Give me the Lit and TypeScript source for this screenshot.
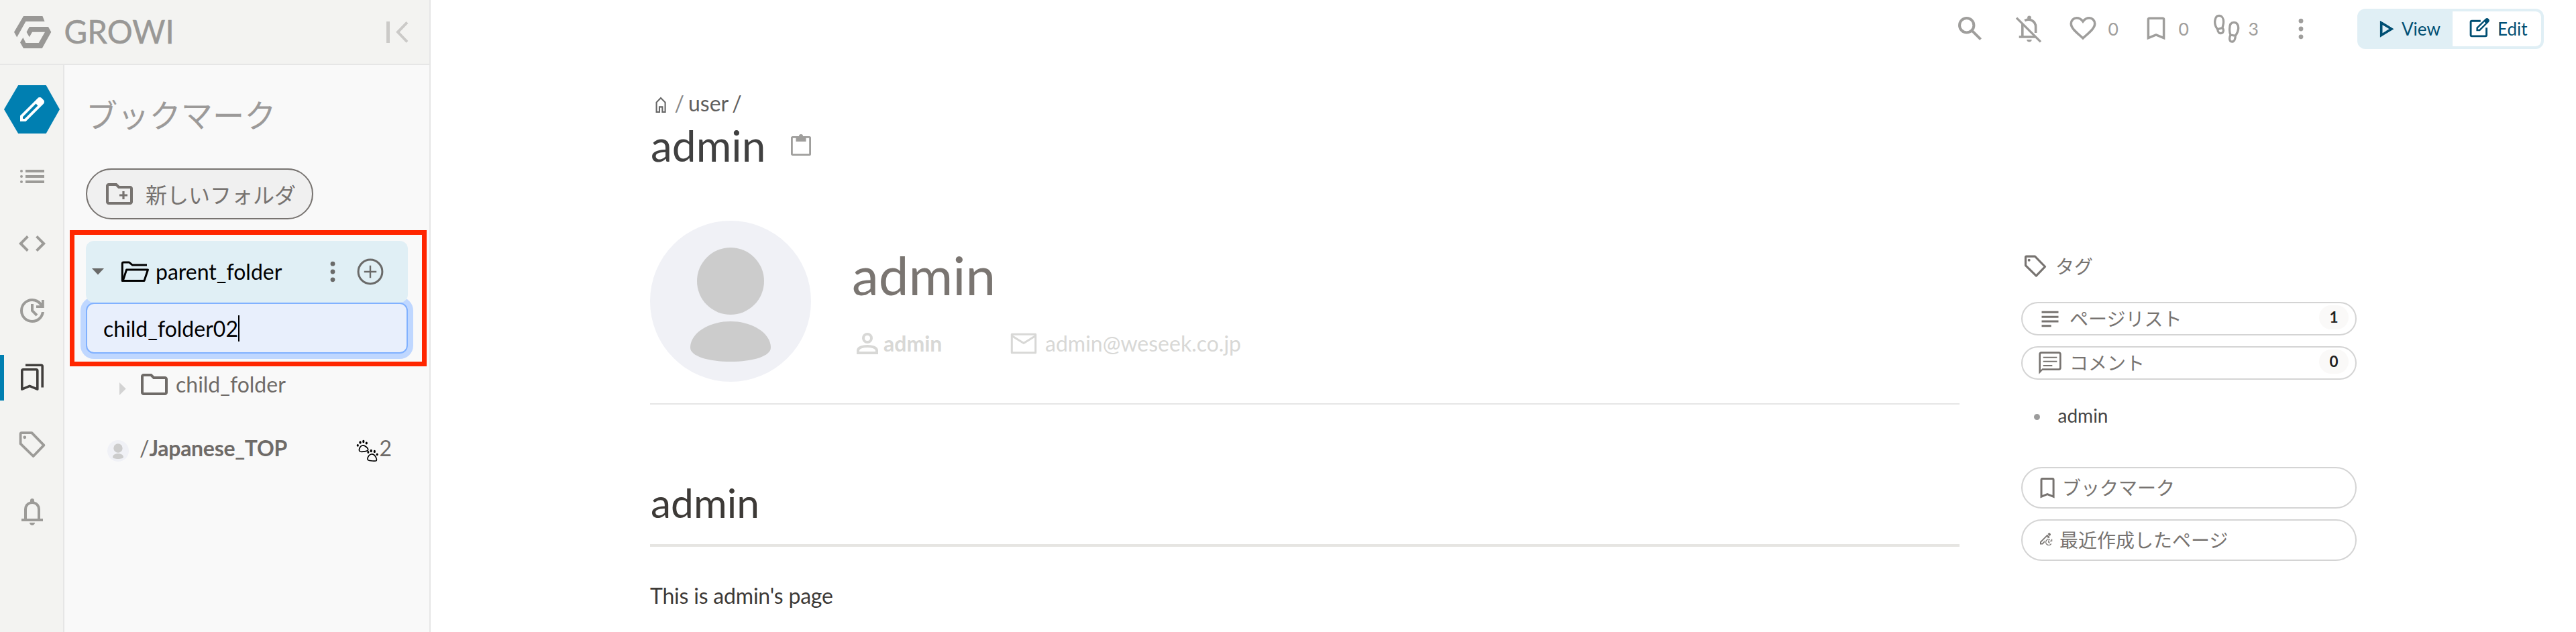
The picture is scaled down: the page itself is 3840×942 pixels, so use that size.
import { LitElement, html, svg, css } from "lit";
import { customElement, property } from "lit/decorators.js";
import { classMap } from "lit/directives/class-map.js";

const stroke = (d: string, w: number) =>
  svg`<path d=${d} fill="none" stroke="currentColor" stroke-width=${w} stroke-linejoin="round"/>`;
const miter = (d: string, w: number) =>
  svg`<path d=${d} fill="none" stroke="currentColor" stroke-width=${w}/>`;
const fill = (d: string) => svg`<path d=${d} fill="currentColor"/>`;

const FOLDER =
  "M4 20q-.825 0-1.412-.587Q2 18.825 2 18V6q0-.825.588-1.412Q3.175 4 4 4h6l2 2h8q.825 0 1.413.588Q22 7.175 22 8v10q0 .825-.587 1.413Q20.825 20 20 20Zm0-2h16V8h-8.825l-2-2H4Z";

/** Glyph table: [viewBox width, viewBox height, content]. */
const ICONS: Record<string, [number, number, unknown]> = {
  logo: [56, 48, fill("M14 0H42.4L45.6 8H17.4L4.2 31.5 0 23.7ZM22.8 16H51L55.3 23.7 41.8 48H14L9 39.3 13.4 32 17.4 40H36.7L46 23.7H27L22.8 31.3 18.5 23.7Z")],
  collapse: [33, 32, svg`${fill("M0 0H5V32H0Z")}${miter("M31 1.3 17 15.8 31 30.3", 4)}`],
  pencil: [24, 24, fill("M5 19h1.425L16.2 9.225 14.775 7.8 5 17.575V19Zm-2 2v-4.25L16.2 3.575q.3-.275.663-.425.362-.15.762-.15t.775.15q.375.15.65.45L20.425 5q.3.275.437.65.138.375.138.75 0 .4-.138.763-.137.362-.437.662L7.25 21Z")],
  list: [24, 24, fill("M7 9V7h14v2Zm0 4v-2h14v2Zm0 4v-2h14v2ZM4 9a1 1 0 1 1 0-2 1 1 0 0 1 0 2Zm0 4a1 1 0 1 1 0-2 1 1 0 0 1 0 2Zm0 4a1 1 0 1 1 0-2 1 1 0 0 1 0 2Z")],
  code: [24, 24, fill("M8 18l-6-6 6-6 1.425 1.425-4.6 4.6L9.4 16.6Zm8 0-1.425-1.425 4.6-4.6L14.6 7.4 16 6l6 6Z")],
  update: [24, 24, fill("M12 21q-1.875 0-3.512-.712-1.638-.713-2.85-1.926-1.213-1.212-1.926-2.85Q3 13.875 3 12t.712-3.513q.713-1.637 1.926-2.85 1.212-1.212 2.85-1.925Q10.125 3 12 3q2.05 0 3.887.875 1.838.875 3.113 2.475V4h1.9v6h-5.9V8.1h2.75q-1.025-1.4-2.525-2.2Q13.725 5 12 5 9.075 5 7.038 7.037 5 9.075 5 12t2.038 4.962Q9.075 19 12 19q2.625 0 4.588-1.7 1.962-1.7 2.337-4.3h2.05q-.375 3.425-2.937 5.712Q15.475 21 12 21Zm2.8-4.8L11 12.4V7h2v4.6l3.2 3.2Z")],
  bookmarks: [24, 24, svg`${stroke("M4.4 20.6V6.8q0-.9.9-.9H15q.9 0 .9.9V20.6L10.1 18.2Z", 1.8)}${miter("M7 2.6H18.7q.9 0 .9.9V19.3", 1.8)}`],
  tag: [24, 24, svg`${stroke("M3.3 3.9q0-.8.8-.8H11.7L20.7 12.3 12.8 20.5 3.3 11.2Z", 1.9)}<circle cx="6.4" cy="6.4" r="1.2" fill="currentColor"/>`],
  bell: [24, 24, fill("M4 19v-2h2v-7q0-2.075 1.25-3.688Q8.5 4.7 10.5 4.2v-.7q0-.625.438-1.063Q11.375 2 12 2t1.062.437q.438.438.438 1.063v.7q2 .5 3.25 2.112Q18 7.925 18 10v7h2v2Zm8 3q-.825 0-1.412-.587Q10 20.825 10 20h4q0 .825-.587 1.413Q12.825 22 12 22Zm-4-5h8v-7q0-1.65-1.175-2.825Q13.65 6 12 6q-1.65 0-2.825 1.175Q8 8.35 8 10Z")],
  folder: [24, 24, fill(FOLDER)],
  folderPlus: [24, 24, svg`${fill(FOLDER)}${fill("M14.2 16h1.6v-2.2H18v-1.6h-2.2V10h-1.6v2.2H12v1.6h2.2Z")}`],
  folderOpen: [48, 48, svg`${stroke("M5.5 37.4H4.3V11.8q0-1.900 1.900-1.900H14.300L19.500 14.100H41", 3)}${stroke("M5.3 37.400 10.600 21H42.500L37 37.400Z", 3)}`],
  down: [18, 10, fill("M0 0H18L9 9.5Z")],
  right: [10, 19, fill("M0 0V19L9.7 9.5Z")],
  dots: [24, 24, svg`<g fill="currentColor"><circle cx="12" cy="6.1" r="1.7"/><circle cx="12" cy="12" r="1.7"/><circle cx="12" cy="17.9" r="1.7"/></g>`],
  plus: [48, 48, svg`<circle cx="24" cy="24" r="17.9" fill="none" stroke="currentColor" stroke-width="3"/>${miter("M24 14.8V33.2M14.8 24H33.2", 2.4)}`],
  paws: [33, 34, svg`<g fill="currentColor"><ellipse cx="2.3" cy="8.8" rx="1.6" ry="1.9"/><ellipse cx="6" cy="4.4" rx="1.6" ry="2.2"/><ellipse cx="10.8" cy="3" rx="1.6" ry="2.2"/><ellipse cx="15.3" cy="5.6" rx="1.6" ry="2"/><ellipse cx="17.9" cy="19" rx="1.5" ry="1.9"/><ellipse cx="22.2" cy="17" rx="1.6" ry="2.2"/><ellipse cx="27.3" cy="17.9" rx="1.6" ry="2.2"/><ellipse cx="31.2" cy="22.3" rx="1.5" ry="1.9"/></g>${stroke("M5.8 18C3.6 17 4.3 14 5.8 11.5 7.5 8.7 10.5 8.3 13 9.8 15.5 11.3 18 14 17.6 15.8 17 17.7 8.5 18.8 5.8 18ZM17.6 30.6C16 29 17.3 26.5 18.8 24.3 20.6 21.8 24 21 26.6 23 29.5 25.3 31 30 30.2 31.4 29.3 32.6 19.5 32 17.6 30.6Z", 1.7)}`],
  search: [48, 48, svg`<circle cx="18.7" cy="18.7" r="10.7" fill="none" stroke="currentColor" stroke-width="4"/>${miter("M26.3 26.3 39.6 39.6", 4)}`],
  bellOff: [48, 48, svg`${miter("M5 7.6 41 43.4", 3.4)}${miter("M17.2 11.8C24.5 7.6 33.6 12.3 33.6 21V30M13.8 17V36M8.7 36H34", 3.6)}<path d="M20.3 40h7.4q0 3.4-3.7 3.4t-3.7-3.4Z" fill="currentColor"/><circle cx="24" cy="7.4" r="2.9" fill="currentColor"/>`],
  heart: [48, 48, miter("M24 38C15 29.6 6.3 23.3 6.3 16.2 6.3 11.4 10 7.8 14.6 7.8 18.2 7.8 21.4 9.6 24 13 26.6 9.6 29.8 7.8 33.4 7.8 38 7.8 41.7 11.4 41.7 16.2 41.7 23.3 33 29.6 24 38Z", 3.6)],
  bookmark: [48, 48, miter("M12.4 37.7V10q0-1.8 1.8-1.8H33.8q1.8 0 1.8 1.8V37.7L24 33Z", 3.5)],
  foot: [48, 48, stroke("M9.7 24.8C6.4 20.5 5 15.5 6 10.8 6.9 6.3 9.4 4.4 12 4.4 16.2 4.4 18.6 8.6 18.6 13.4 18.6 17 17.6 19.2 17 22.4ZM9.7 24.8 17 22.4C19.3 25.5 18.8 29.5 15.5 30.5 12.2 31.4 10.2 29.2 9.7 24.8ZM29 33C27.4 29.8 27.6 28 27.6 24 27.6 18 30 14.4 34 14.4 38.6 14.4 40.9 18.4 40.7 23.2 40.5 27.4 38.8 31 36.3 34.4ZM29 33 36.3 34.4C36.2 38.8 34.6 43.2 31.2 43.2 27.4 43.2 26.6 38 29 33Z", 3.3)],
  play: [24, 26, miter("M2.7 3.9V22.6L18 13.2Z", 3.6)],
  edit: [32, 32, svg`${stroke("M17.8 6.3H4.7q-1.6 0-1.6 1.6V27.3q0 1.6 1.6 1.6H25q1.6 0 1.6-1.6V16.2", 2.9)}<path d="M11.4 21.3V16L24.9 2.9q2.6-2 5 .4 2 2.4 0 4.6L16.8 21.3ZM14 18.8H15.8L25.2 9.4 23.5 7.6 14 17Z" fill="currentColor" fill-rule="evenodd"/>`],
  home: [24, 26, miter("M3.6 24V9.6L10 2.9 16.6 9.6V24H12.4V16.4H8V24Z", 2.1)],
  clipboard: [36, 36, svg`${stroke("M5.6 6.4H30.4q1.2 0 1.2 1.2V31.400q0 1.2-1.2 1.2H5.6q-1.2 0-1.2-1.2V7.6q0-1.2 1.2-1.2Z", 2.8)}<path d="M10.5 5H15a3 3 0 0 1 6 0H25.5V13H10.5Z" fill="currentColor"/>`],
  person: [24, 24, svg`<circle cx="12" cy="8" r="3" fill="none" stroke="currentColor" stroke-width="2"/>${miter("M5 19V17.2C5 14.9 9 14 12 14S19 14.9 19 17.2V19Z", 2)}`],
  mail: [48, 48, svg`${stroke("M6.3 10.2H41.7V37.8H6.3Z", 3)}${miter("M6.3 12.5 24 23.5 41.7 12.5", 3)}`],
  lines: [24, 24, fill("M4.5 5.3h15v1.8h-15ZM4.5 9.5h15v1.8h-15ZM4.5 13.5h15v1.8h-15ZM4.5 17.5h8.5v1.8h-8.5Z")],
  comment: [24, 24, svg`${fill("M2 22V4q0-.825.588-1.413Q3.175 2 4 2h16q.825 0 1.413.587Q22 3.175 22 4v12.6q0 .825-.587 1.413Q20.825 18.6 20 18.6H5.2Zm1.6-3.6L5 17h14.6q.8 0 .8-.8V4.400q0-.8-.8-.8H4.400q-.8 0-.8.8Z")}${fill("M5.8 6.4h12.400v1.200H5.8ZM5.8 10.100h12.400v1.200H5.8ZM5.8 13.800h8.200v1.200H5.8Z")}`],
  bookmarkSmall: [40, 40, miter("M11 33.2V8.300q0-1.700 1.700-1.700H27.400q1.700 0 1.700 1.700V33.200L20 29.600Z", 3)],
  recent: [20, 21, svg`<path d="M1 18.500V14.500L11.800 3.700 15.700 7.500 5 18.500Z M2.800 16.700H4.200L12.900 7.900 11.500 6.500 2.800 15.300Z" fill="currentColor" fill-rule="evenodd"/><path d="M12.600 2.900 13.700 1.700q1.100-.9 2.500.4 1.600 1.500.4 2.700L15.500 6Z" fill="currentColor"/><circle cx="13.800" cy="14.800" r="6" fill="#fff"/>${miter("M17.700 17.300A4.300 4.300 0 1 1 16 11.300M18.600 10.500V13.400H15.500M13.800 12.500V15.200L15.700 16.500", 1.3)}`],
};

@customElement("gw-icon")
class GwIcon extends LitElement {
  static styles = css`
    :host { display: block; flex: none; line-height: 0; }
    svg { display: block; width: 100%; height: 100%; overflow: visible; }
  `;
  @property() name = "";
  render() {
    const [w, h, body] = ICONS[this.name];
    return html`<svg viewBox="0 0 ${w} ${h}" aria-hidden="true">${body}</svg>`;
  }
}

@customElement("gw-avatar")
class GwAvatar extends LitElement {
  static styles = css`
    :host { display: block; flex: none; }
    svg { display: block; width: 100%; height: 100%; }
  `;
  render() {
    return html`<svg viewBox="0 0 240 240" aria-hidden="true">
      <circle cx="120" cy="120" r="120" fill="#f0f1f6" />
      <circle cx="120" cy="90" r="50" fill="#ccc" />
      <path d="M60 189C60 168 87 150 120 150S180 168 180 189C180 202 153 210 120 210S60 202 60 189Z" fill="#ccc" />
    </svg>`;
  }
}

@customElement("gw-sidebar")
class GwSidebar extends LitElement {
  static styles = css`
    :host { display: flex; flex-direction: column; width: 640px; border-right: 2px solid #e6e6e6; background: #f9f9f9; position: relative; }
    .brand { display: flex; align-items: center; height: 95px; border-bottom: 2px solid #e6e6e6; background: #f3f3f1; padding: 0 31px 0 20.6px; }
    .logo { width: 56px; height: 48px; color: #999896; }
    .name { font-size: 47.500px; line-height: 56px; color: #999896; margin: -2px auto 0 19px; -webkit-text-stroke: 0.5px #999896; }
    .collapse { width: 33px; height: 32px; color: #cbcac8; }
    .body { display: flex; flex: 1; }
    .rail { display: flex; flex-direction: column; width: 94px; border-right: 2px solid #e6e6e6; background: #f3f3f1; padding-top: 30px; }
    .create { display: grid; place-items: center; width: 83px; height: 72px; margin: 0 0 30px 6px; background: #007fb1; color: #fff; clip-path: polygon(25.500% 0, 75.500% 0, 100% 50%, 75.500% 100%, 25.500% 100%, 0 50%); }
    .i48 { width: 48px; height: 48px; }
    .item { display: grid; place-items: center; height: 68px; margin-bottom: 32px; padding-left: 2px; color: #9c9b98; }
    .item.active { color: #403e3c; box-shadow: inset 6px 0 #007fb1; }
    .panel { flex: 1; padding: 45px 32px 0; }
    .title { margin: 0; font-weight: 400; font-size: 47.250px; line-height: 60px; color: #9c9a99; }
    .new { display: flex; align-items: center; gap: 15px; box-sizing: border-box; width: 339px; height: 76px; margin: 49px 0 32px; padding-left: 24px; border: 2px solid #777370; border-radius: 38px; background: #f0f0f0; color: #777370; font-size: 32px; }
    .row { display: flex; align-items: center; height: 92px; box-sizing: border-box; font-size: 32px; line-height: 48px; color: #6f6b68; }
    .parent { position: relative; z-index: 1; background: #e0eff5; border-radius: 12px; padding: 0 32px 0 9px; color: #000; }
    .down { width: 18px; height: 10px; margin-right: 23px; color: #6a6a69; }
    .grow { flex: 1; }
    .parent .grow { margin-left: 6px; }
    .act { color: #6a6a69; margin-left: 8px; }
    .input { display: flex; align-items: center; height: 76px; box-sizing: border-box; padding-left: 24px; border: 2px solid #80b1ff; border-radius: 12px; background: #e8effc; box-shadow: 0 0 0 8px #bfd7ff; color: #000; font-size: 32px; }
    .caret { width: 2px; height: 39px; background: #000; }
    .child { padding-left: 50px; }
    .right { width: 10px; height: 19px; margin: 12px 18px 0 0; color: #d3d3d3; }
    .child .grow { margin-left: 8px; }
    .page { margin-top: 7px; padding: 0 24px 0 32px; }
    .page span { margin-bottom: 8px; }
    .page b { letter-spacing: -0.300px; }
    .av { width: 32px; height: 32px; margin-right: 16px; }
    .paws { width: 33px; height: 34px; color: #000; margin-right: 1px; }
    .mark { position: absolute; left: 104px; top: 342.500px; width: 518px; height: 189px; border: 7.500px solid #ff2600; z-index: 2; }
  `;
  render() {
    const nav = ["list", "code", "update", "bookmarks", "tag", "bell"];
    return html`
      <div class="brand">
        <gw-icon class="logo" name="logo"></gw-icon>
        <span class="name">GROWI</span>
        <gw-icon class="collapse" name="collapse"></gw-icon>
      </div>
      <div class="body">
        <nav class="rail">
          <div class="create"><gw-icon class="i48" name="pencil"></gw-icon></div>
          ${nav.map((n) => html`<div class=${classMap({ item: true, active: n === "bookmarks" })}><gw-icon class="i48" name=${n}></gw-icon></div>`)}
        </nav>
        <div class="panel">
          <h3 class="title">ブックマーク</h3>
          <div class="new"><gw-icon class="i48" name="folderPlus"></gw-icon><span>新しいフォルダ</span></div>
          <div class="row parent">
            <gw-icon class="down" name="down"></gw-icon>
            <gw-icon class="i48" name="folderOpen"></gw-icon>
            <span class="grow">parent_folder</span>
            <gw-icon class="i48 act" name="dots"></gw-icon>
            <gw-icon class="i48 act" name="plus"></gw-icon>
          </div>
          <div class="input"><span>child_folder02</span><span class="caret"></span></div>
          <div class="row child">
            <gw-icon class="right" name="right"></gw-icon>
            <gw-icon class="i48" name="folder"></gw-icon>
            <span class="grow">child_folder</span>
          </div>
          <div class="row page">
            <gw-avatar class="av"></gw-avatar>
            <span class="grow">/<b>Japanese_TOP</b></span>
            <gw-icon class="paws" name="paws"></gw-icon>
            <span>2</span>
          </div>
        </div>
      </div>
      <div class="mark"></div>
    `;
  }
}

@customElement("gw-toolbar")
class GwToolbar extends LitElement {
  static styles = css`
    :host { display: flex; align-items: center; justify-content: flex-end; height: 86px; padding-right: 48px; color: #9f9e9c; font-size: 26.500px; line-height: 42px; }
    .i { width: 48px; height: 48px; }
    .stat { display: flex; align-items: center; }
    .stat .n { width: 16px; }
    .watch { margin-left: 40px; }
    .like { margin-left: 32px; gap: 14px; }
    .mark { margin-left: 31px; gap: 10px; }
    .seen { margin-left: 32px; gap: 8px; }
    .more { margin: 0 60.500px 0 38px; }
    .modes { display: flex; box-sizing: border-box; width: 278px; height: 60px; border: 4px solid #e0eff5; border-radius: 12px; background: #e0eff5; color: #004f73; overflow: hidden; font-size: 26px; }
    .mode { display: flex; align-items: center; box-sizing: border-box; }
    .view { width: 138px; padding-left: 29px; gap: 9px; }
    .edit { flex: 1; background: #fff; border-radius: 0 8px 8px 0; padding-left: 24px; gap: 11px; }
    .play { width: 24px; height: 26px; }
    .pen { width: 32px; height: 32px; margin-bottom: 4px; }
  `;
  render() {
    return html`
      <gw-icon class="i" name="search"></gw-icon>
      <gw-icon class="i watch" name="bellOff"></gw-icon>
      <div class="stat like"><gw-icon class="i" name="heart"></gw-icon><span class="n">0</span></div>
      <div class="stat mark"><gw-icon class="i" name="bookmark"></gw-icon><span class="n">0</span></div>
      <div class="stat seen"><gw-icon class="i" name="foot"></gw-icon><span class="n">3</span></div>
      <gw-icon class="i more" name="dots"></gw-icon>
      <div class="modes">
        <div class="mode view"><gw-icon class="play" name="play"></gw-icon><span class="n">View</span></div>
        <div class="mode edit"><gw-icon class="pen" name="edit"></gw-icon><span class="n">Edit</span></div>
      </div>
    `;
  }
}

@customElement("gw-page")
class GwPage extends LitElement {
  static styles = css`
    :host { display: block; font-size: 32px; line-height: 48px; color: #3d3a37; }
    .crumbs { display: flex; color: #5f5e5d; height: 48px; }
    .home { width: 24px; height: 26px; margin: 13px 7px 0 5.500px; color: #666; }
    .sep { color: #888; margin-right: 6px; }
    .sep2 { margin-left: 5px; }
    .title { display: flex; align-items: center; gap: 35px; font-size: 64px; line-height: 77px; color: #404040; margin: 0 0 74px 1px; }
    .clip { width: 36px; height: 36px; color: #9f9e9c; margin-bottom: 2px; }
    .profile { display: flex; gap: 60px; padding-bottom: 32px; border-bottom: 2px solid #e6e6e6; }
    .av { width: 240px; height: 240px; }
    .who { padding-top: 32px; }
    .name { font-size: 80px; line-height: 96px; color: #7a7571; margin: 0 0 31px 1px; }
    .info { display: flex; color: #d8d8d6; }
    .user { display: flex; width: 233px; font-weight: 700; }
    .mail { display: flex; gap: 8px; }
    .i { width: 48px; height: 48px; }
    h1 { margin: 110px 0 48.500px; font-weight: 400; font-size: 60.500px; line-height: 72px; padding: 0 0 26px 1px; border-bottom: 4px solid #e6e5e2; }
    p { margin: 0; letter-spacing: -0.200px; }
  `;
  render() {
    return html`
      <div class="crumbs"><gw-icon class="home" name="home"></gw-icon><span class="sep">/</span><span>user</span><span class="sep2">/</span></div>
      <div class="title"><span>admin</span><gw-icon class="clip" name="clipboard"></gw-icon></div>
      <div class="profile">
        <gw-avatar class="av"></gw-avatar>
        <div class="who">
          <div class="name">admin</div>
          <div class="info">
            <div class="user"><gw-icon class="i" name="person"></gw-icon><span>admin</span></div>
            <div class="mail"><gw-icon class="i" name="mail"></gw-icon><span>admin@weseek.co.jp</span></div>
          </div>
        </div>
      </div>
      <h1>admin</h1>
      <p>This is admin's page</p>
    `;
  }
}

@customElement("gw-side-contents")
class GwSideContents extends LitElement {
  static styles = css`
    :host { display: block; padding-top: 246.500px; font-size: 28px; line-height: 40px; color: #777370; }
    .tags { display: flex; gap: 10px; padding-left: 1px; margin-bottom: 33.500px; }
    .i { width: 40px; height: 40px; }
    .btn { display: flex; align-items: center; box-sizing: border-box; height: 50px; border: 2px solid #d4d4d4; border-radius: 31px; padding: 0 10px 0 21px; margin-bottom: 16px; }
    .btn .label { margin-left: 9px; flex: 1; }
    .badge { width: 44px; height: 36px; border-radius: 18px; background: #faf9f8; color: #222; font-weight: 700; font-size: 22.500px; line-height: 35px; text-align: center; margin-bottom: 4px; }
    ul { list-style: none; margin: 31.500px 0 56.500px; padding: 0; }
    li { display: flex; align-items: center; gap: 26.500px; padding-left: 19px; line-height: 42px; color: #444; }
    li::before { content: ""; width: 9px; height: 9px; border-radius: 50%; background: #9c9c9c; margin-top: 6px; }
    .tall { height: 62px; }
    .tall.marks { padding-left: 17px; }
    .tall.marks .label { margin-left: 2px; }
    .tall.recent { padding-left: 25px; }
    .tall.recent .label { margin-left: 10px; }
    .clock { width: 20px; height: 21px; margin-bottom: 4px; }
  `;
  render() {
    return html`
      <div class="tags"><gw-icon class="i" name="tag"></gw-icon><span>タグ</span></div>
      <div class="btn"><gw-icon class="i" name="lines"></gw-icon><span class="label">ページリスト</span><span class="badge">1</span></div>
      <div class="btn"><gw-icon class="i" name="comment"></gw-icon><span class="label">コメント</span><span class="badge">0</span></div>
      <ul><li>admin</li></ul>
      <div class="btn tall marks"><gw-icon class="i" name="bookmarkSmall"></gw-icon><span class="label">ブックマーク</span></div>
      <div class="btn tall recent"><gw-icon class="clock" name="recent"></gw-icon><span class="label">最近作成したページ</span></div>
    `;
  }
}

@customElement("app-root")
class AppRoot extends LitElement {
  static styles = css`
    :host { display: flex; width: 3840px; height: 942px; overflow: hidden; background: #fff; font-family: Lato, "Noto Sans CJK JP", sans-serif; }
    .main { flex: 1; }
    .content { display: grid; grid-template-columns: 1952px 500px; column-gap: 92px; padding: 44px 0 0 327px; }
  `;
  render() {
    return html`
      <gw-sidebar></gw-sidebar>
      <div class="main">
        <gw-toolbar></gw-toolbar>
        <div class="content">
          <gw-page></gw-page>
          <gw-side-contents></gw-side-contents>
        </div>
      </div>
    `;
  }
}
